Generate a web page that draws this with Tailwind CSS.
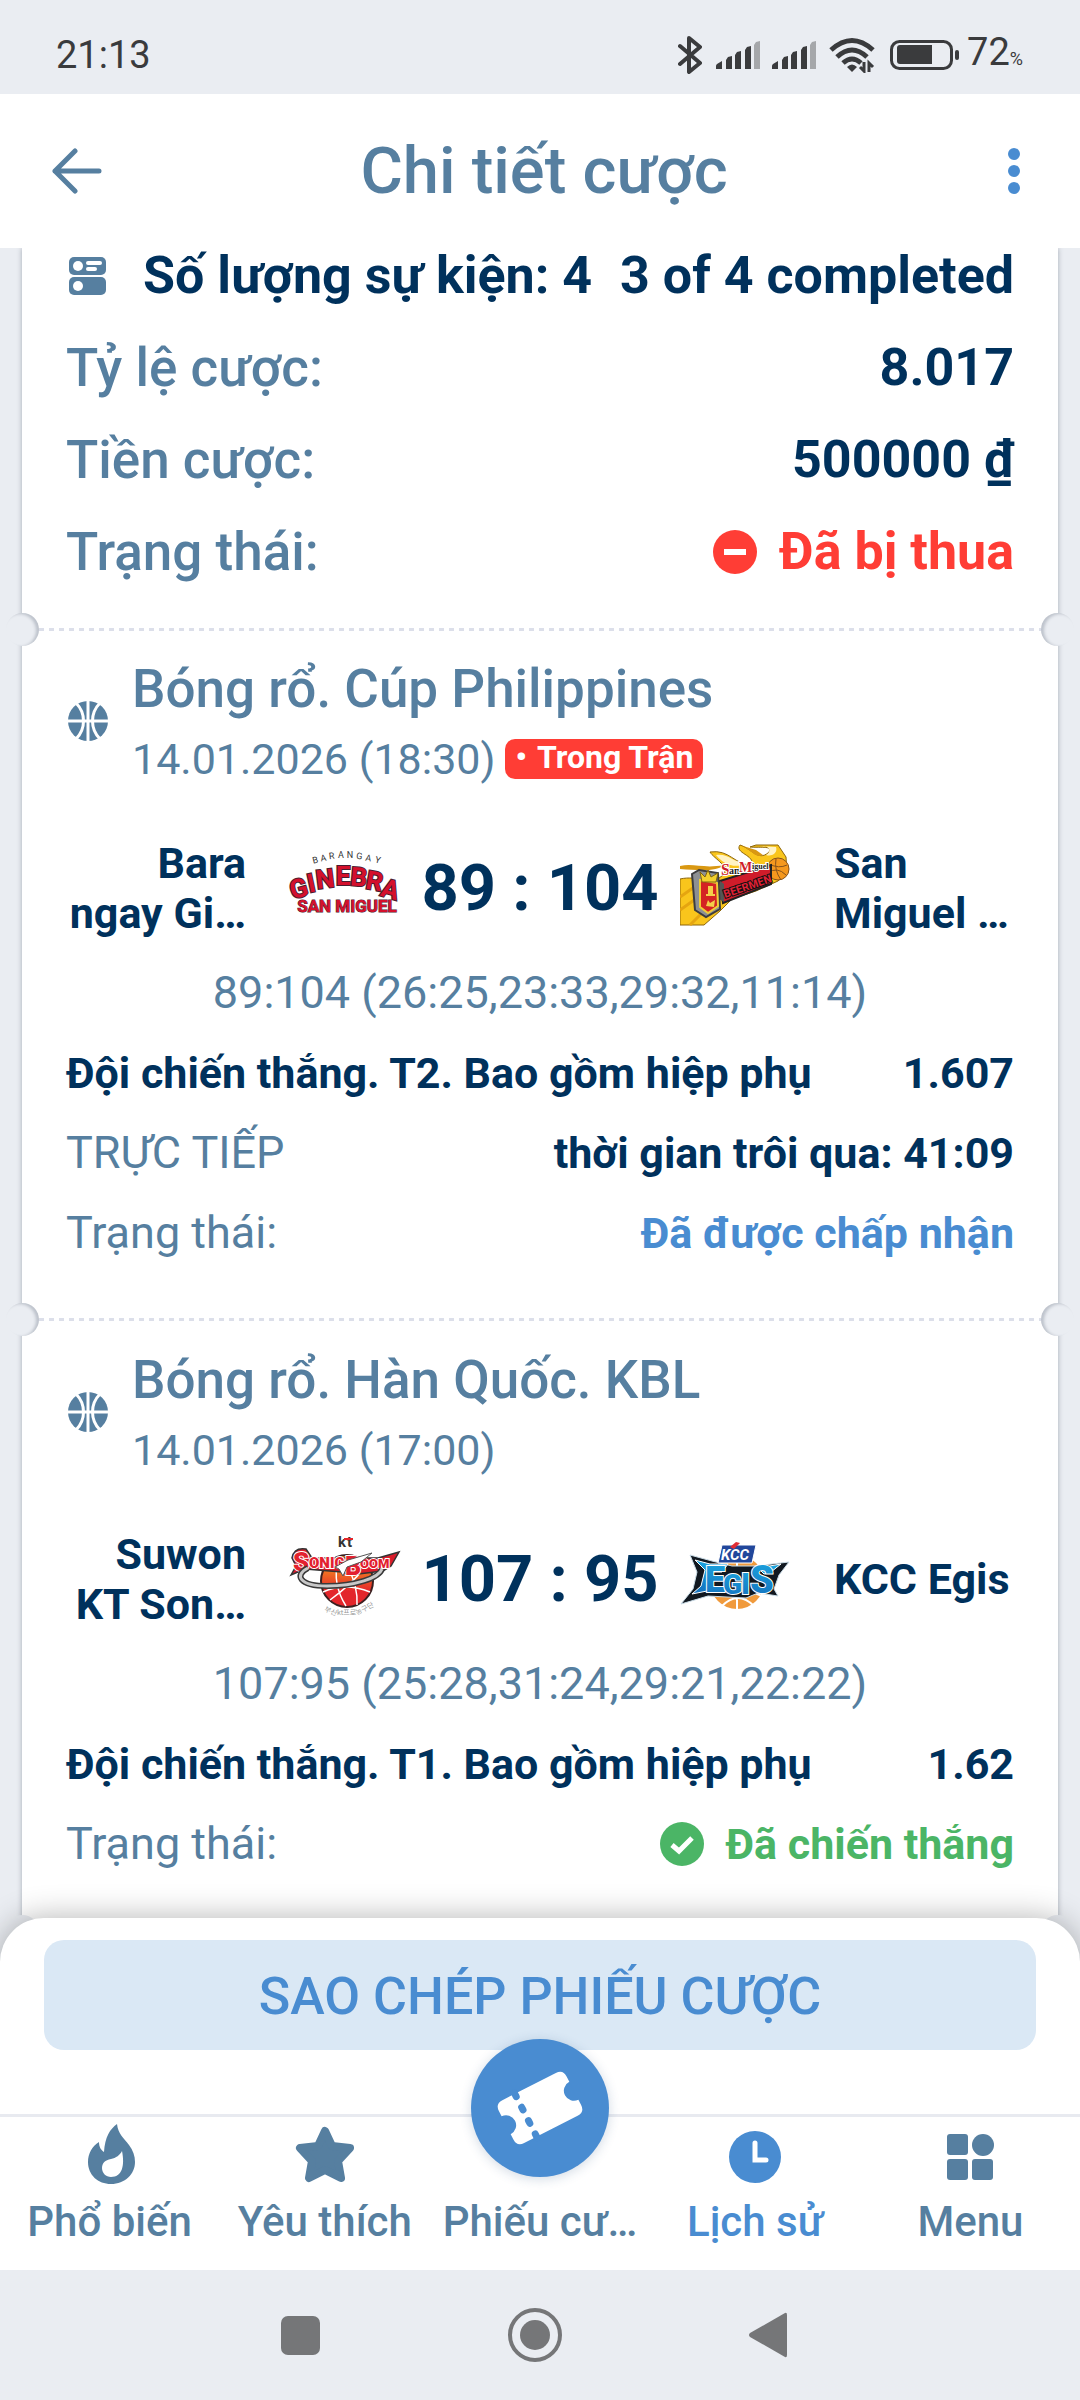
<!DOCTYPE html>
<html lang="vi">
<head>
    <meta charset="UTF-8">
    <meta name="viewport" content="width=device-width, initial-scale=1.0">
    <title>Chi tiết cược</title>
    <script src="https://cdn.jsdelivr.net/npm/@tailwindcss/browser@4"></script>
</head>
<body class="min-h-screen flex flex-col bg-[#eaedf2] font-[Roboto,'Noto_Sans',sans-serif] text-[#567fa0]">

    <!-- Shared icons -->
    <svg class="hidden">
        <symbol id="basketball" viewBox="0 0 40 40">
            <circle cx="20" cy="20" r="20" fill="currentColor"/>
            <path d="M20 0V40M0 20H40M8 2C18 12 18 28 8 38M32 2C22 12 22 28 32 38" fill="none" stroke="#fff" stroke-width="3"/>
        </symbol>
        <symbol id="signal" viewBox="0 0 44 28">
            <path d="M0 28V25Q0 24 1 23L6 20V28ZM10 28V19L12 16L16 15V28ZM19 28V14L21 11L25 10V28ZM29 28V9L31 6L35 5V28Z" fill="#3a3b3d"/>
            <path d="M38 28V4L40 1L44 0V28Z" fill="#a5a7aa"/>
        </symbol>
    </svg>

    <!-- Status bar -->
    <div class="h-[94px] pt-4 pl-14 pr-[57px] flex items-center justify-between text-[#3a3b3d]">
        <span class="text-[38px] leading-[50px]">21:13</span>
        <div class="flex items-center">
            <svg class="w-6 h-[38px] mr-[14px]" viewBox="0 0 24 38" fill="none" stroke="#3a3b3d" stroke-width="4" stroke-linecap="round" stroke-linejoin="round">
                <path d="M2 10L22 27L11 36V2L22 11L2 28"/>
            </svg>
            <svg class="w-11 h-7 mr-3"><use href="#signal"/></svg>
            <svg class="w-11 h-7 mr-[13px]"><use href="#signal"/></svg>
            <svg class="w-[46px] h-9 mr-[15px]" viewBox="0 0 46 36" fill="none" stroke="#3a3b3d" stroke-width="5">
                <path d="M2 13Q23 -6 44 13M8 20Q23 6 38 20M14 26Q23 18 32 26"/>
                <path d="M18 30Q23 25 28 30L23 35Z" fill="#3a3b3d" stroke="none"/>
                <path d="M35 25V34L31 30M40 35V26L44 30" stroke-width="3"/>
            </svg>
            <svg class="w-[69px] h-[30px] mr-2" viewBox="0 0 69 30">
                <rect x="1.5" y="1.5" width="60" height="27" rx="8" fill="none" stroke="#3a3b3d" stroke-width="3"/>
                <path d="M10 5H42V24H10Q7 24 7 21V8Q7 5 10 5Z" fill="#3a3b3d"/>
                <rect x="65" y="10" width="4" height="10" rx="2" fill="#3a3b3d"/>
            </svg>
            <span class="flex items-baseline leading-[50px] text-[38px]">72<span class="text-[18px]">%</span></span>
        </div>
    </div>

    <!-- Header -->
    <header class="relative z-10 h-[154px] px-[52px] flex items-center justify-between bg-white">
        <button aria-label="Back">
            <svg class="w-[50px] h-[46px]" viewBox="0 0 50 46" fill="none" stroke="currentColor" stroke-width="5" stroke-linecap="round" stroke-linejoin="round">
                <path d="M23 3L3 23L23 43M3 23H47"/>
            </svg>
        </button>
        <h1 class="pl-2 text-[65px] leading-[76px] font-medium">Chi tiết cược</h1>
        <button aria-label="More" class="w-[50px] flex justify-end">
            <svg class="w-[26px] h-[46px]" viewBox="0 0 26 46" fill="#498cd1">
                <circle cx="12" cy="6" r="6"/><circle cx="12" cy="23" r="6"/><circle cx="12" cy="40" r="6"/>
            </svg>
        </button>
    </header>

    <main class="mx-[22px] flex flex-col bg-white shadow-[0_0_5px_rgba(60,70,90,0.4)]">

        <!-- Bet summary -->
        <section class="px-11 pt-[2px] pb-[35px] flex flex-col gap-10 text-[53px] leading-[52px] font-medium">
            <div class="flex items-center justify-between font-bold text-[#00315c]">
                <svg class="w-[42px] h-[38px]" viewBox="0 0 42 38">
                    <rect x="3" y="0" width="37" height="18" rx="5" fill="#567fa0"/>
                    <rect x="3" y="20" width="37" height="18" rx="5" fill="#567fa0"/>
                    <g fill="#fff">
                        <circle cx="12" cy="9" r="5"/><circle cx="12" cy="29" r="5"/>
                        <rect x="20" y="4" width="16" height="4" rx="2"/><rect x="20" y="10" width="11" height="4" rx="2"/>
                    </g>
                </svg>
                <div class="flex gap-7 text-[52px]"><span>Số lượng sự kiện: 4</span><span>3 of 4 completed</span></div>
            </div>
            <div class="flex justify-between"><span>Tỷ lệ cược:</span><span class="text-[52px] font-bold text-[#00315c]">8.017</span></div>
            <div class="flex justify-between"><span>Tiền cược:</span><span class="text-[52px] font-bold text-[#00315c]">500000 ₫</span></div>
            <div class="flex justify-between">
                <span>Trạng thái:</span>
                <span class="flex items-center gap-[22px] text-[52px] font-bold text-[#ff3d35]">
                    <svg class="size-11" viewBox="0 0 44 44"><circle cx="22" cy="22" r="22" fill="currentColor"/><rect x="11" y="19" width="22" height="6" fill="#fff"/></svg>
                    Đã bị thua
                </span>
            </div>
        </section>

        <!-- Ticket tear line -->
        <div class="h-[33px] -mx-4 flex items-center justify-between">
            <div class="size-[33px] rounded-full bg-[#eaedf2] shadow-[inset_-3px_1px_3px_rgba(60,70,90,0.25)]"></div>
            <div class="flex-1 h-[3px] bg-[repeating-linear-gradient(90deg,#dcdfea_0_5px,#fff_5px_10px)]"></div>
            <div class="size-[33px] rounded-full bg-[#eaedf2] shadow-[inset_3px_1px_3px_rgba(60,70,90,0.25)]"></div>
        </div>

        <!-- Event 1 -->
        <section class="px-11 pt-[5px] pb-[30px] text-[43px]">
            <div class="flex items-center gap-[22px]">
                <svg class="size-11 p-[2px]"><use href="#basketball"/></svg>
                <div>
                    <h2 class="text-[53px] leading-[76px] font-medium">Bóng rổ. Cúp Philippines</h2>
                    <p class="flex items-center gap-[10px] leading-[64px]">14.01.2026 (18:30)
                        <span class="h-10 px-[10px] flex gap-[10px] rounded-[10px] bg-[#ff3d35] text-white text-[32px] leading-[37px] font-bold"><span>•</span>Trong Trận</span>
                    </p>
                </div>
            </div>
            <div class="mt-[42px] mb-[10px] flex items-center text-[#00315c] font-bold">
                <p class="flex-1 mr-11 text-right leading-[50px]">Bara<br>ngay Gi…</p>
                <svg class="size-[110px] overflow-visible" viewBox="0 0 110 110" font-family="Roboto, sans-serif" text-anchor="middle">
                    <g font-size="9" font-weight="400" fill="#333">
                        <text x="26" y="30" transform="rotate(-14 26 30)">B</text><text x="34" y="28" transform="rotate(-10 34 28)">A</text><text x="42" y="26" transform="rotate(-7 42 26)">R</text><text x="51" y="25">A</text><text x="60" y="25">N</text><text x="69" y="26" transform="rotate(6 69 26)">G</text><text x="78" y="28" transform="rotate(10 78 28)">A</text><text x="87" y="30" transform="rotate(14 87 30)">Y</text>
                    </g>
                    <g font-weight="700" fill="#d4102c" stroke="#4a1c30" stroke-width="2" paint-order="stroke">
                        <g font-size="26">
                            <text x="11" y="64" transform="rotate(-16 11 64)">G</text><text x="23" y="59" transform="rotate(-12 23 59)">I</text><text x="36" y="55" transform="rotate(-7 36 55)">N</text><text x="53" y="52">E</text><text x="68" y="53" transform="rotate(5 68 53)">B</text><text x="83" y="57" transform="rotate(10 83 57)">R</text><text x="98" y="65" transform="rotate(16 98 65)">A</text>
                        </g>
                        <text x="57" y="79" font-size="17" stroke-width="1">SAN MIGUEL</text>
                    </g>
                </svg>
                <p class="w-[280px] text-center text-[65px] leading-[64px]">89 : 104</p>
                <svg class="size-[110px]" viewBox="0 0 110 110" font-family="Roboto, sans-serif">
                    <path d="M0 46C18 42 30 52 42 43C52 34 34 26 30 19C50 16 54 32 72 32C75 22 54 20 60 12C72 16 78 28 88 20C96 12 78 15 70 14L76 12H98L106 24L107 40L98 48L76 58L52 66L40 78L24 92H0Z" fill="#f9c51c" stroke="#8c650b" stroke-width="1"/>
                    <path d="M0 33C14 30 24 36 44 32C38 38 22 38 0 36ZM60 12C72 16 74 26 83 22L76 17Z" fill="#d99812"/>
                    <path d="M36 22C48 20 54 30 66 30C56 36 44 32 36 22ZM80 13C90 12 92 18 86 22C92 24 98 20 96 14Z" fill="#fff3c4"/>
                    <path d="M0 64L20 50M0 77L24 60M10 92L32 70" stroke="#e5a510" stroke-width="3"/>
                    <circle cx="98" cy="36" r="11" fill="#f5981e" stroke="#86521c"/>
                    <path d="M89 31Q99 36 107 32M96 26Q94 37 101 47M88 40Q97 33 106 42" fill="none" stroke="#86521c"/>
                    <path d="M40 48L91 32V51L43 70Z" fill="#cf1c2a" stroke="#222" stroke-width="2"/>
                    <path d="M40 48L44 51V69L39 66Z" fill="#555"/>
                    <text x="45" y="65" font-size="11" font-weight="700" fill="#e02035" stroke="#111" stroke-width="2" paint-order="stroke" transform="rotate(-19 45 65)">BEERMEN</text>
                    <path d="M12 41L19 37L38 40L40 76L26 84L15 77Z" fill="#8d9093" stroke="#3d3d3f" stroke-width="2"/>
                    <path d="M20 47L37 50L38 73L28 80L20 74Z" fill="#d42223" stroke="#efcc37" stroke-width="2"/>
                    <path d="M20 39L25 44L28 37L31 44L38 40L36 49H22Z" fill="#f2d02e" stroke="#80650e"/>
                    <path d="M28 53H33V61H35V63H26V61H28ZM26 73L28 67L30 70L35 67L34 74Z" fill="#f4cf4a"/>
                    <g font-family="Liberation Serif, serif" font-size="16" font-weight="700" stroke="#fff" stroke-width="2" paint-order="stroke">
                        <text x="41" y="42" fill="#cf1c2a">S</text><text x="49" y="41" font-size="10" fill="#222">an</text>
                        <text x="59" y="39" font-size="14" fill="#cf1c2a">M</text><text x="72" y="36" font-size="8" fill="#222">iguel</text>
                    </g>
                </svg>
                <p class="flex-1 ml-11 leading-[50px] whitespace-nowrap">San<br>Miguel …</p>
            </div>
            <p class="text-center text-[45px] leading-[80px]">89:104 (26:25,23:33,29:32,11:14)</p>
            <div class="flex justify-between leading-[80px] font-bold text-[#00315c]"><span>Đội chiến thắng. T2. Bao gồm hiệp phụ</span><span>1.607</span></div>
            <div class="flex justify-between leading-[80px]"><span class="text-[45px]">TRỰC TIẾP</span><span class="font-bold text-[#00315c]">thời gian trôi qua: 41:09</span></div>
            <div class="flex justify-between leading-[80px]"><span class="text-[45px]">Trạng thái:</span><span class="font-bold text-[#498cd1]">Đã được chấp nhận</span></div>
        </section>

        <div class="h-[33px] -mx-4 flex items-center justify-between">
            <div class="size-[33px] rounded-full bg-[#eaedf2] shadow-[inset_-3px_1px_3px_rgba(60,70,90,0.25)]"></div>
            <div class="flex-1 h-[3px] bg-[repeating-linear-gradient(90deg,#dcdfea_0_5px,#fff_5px_10px)]"></div>
            <div class="size-[33px] rounded-full bg-[#eaedf2] shadow-[inset_3px_1px_3px_rgba(60,70,90,0.25)]"></div>
        </div>

        <!-- Event 2 -->
        <section class="px-11 pt-[6px] pb-[31px] text-[43px]">
            <div class="flex items-center gap-[22px]">
                <svg class="size-11 p-[2px]"><use href="#basketball"/></svg>
                <div>
                    <h2 class="text-[53px] leading-[76px] font-medium">Bóng rổ. Hàn Quốc. KBL</h2>
                    <p class="leading-[64px]">14.01.2026 (17:00)</p>
                </div>
            </div>
            <div class="mt-[42px] mb-[10px] flex items-center text-[#00315c] font-bold">
                <p class="flex-1 mr-11 text-right leading-[50px]">Suwon<br>KT Son…</p>
                <svg class="size-[110px] overflow-visible" viewBox="0 0 110 110" font-family="Roboto, sans-serif">
                    <defs>
                        <linearGradient id="ball" x1="0" y1="0" x2="0" y2="1">
                            <stop offset="0.2" stop-color="#f58a1f"/><stop offset="0.7" stop-color="#e3262b"/>
                        </linearGradient>
                    </defs>
                    <circle cx="57" cy="57" r="26" fill="url(#ball)" stroke="#3b2020" stroke-width="2"/>
                    <path d="M33 68Q55 58 80 68M40 76Q62 60 74 44M56 82Q42 60 48 36M67 81Q68 62 58 44" fill="none" stroke="#fff" stroke-width="1.5"/>
                    <text x="48" y="23" font-size="15" font-weight="700" fill="#333">k</text>
                    <text x="57" y="23" font-size="15" font-weight="700" fill="#333">t</text>
                    <path d="M54 15H63" stroke="#e3262b" stroke-width="2"/>
                    <path d="M1 51L6 42L2 34Q4 23 16 25L22 34H88L109 28L101 42L93 47L60 51L52 48L15 45Z" fill="#d91c2b" stroke="#333" stroke-width="1.5"/>
                    <g font-weight="900" fill="#e3202e" stroke="#fff" stroke-width="2" paint-order="stroke">
                        <text x="3" y="47" font-size="26">S</text><text x="19" y="44" font-size="15">ONIC</text>
                        <text x="55" y="51" font-size="25">B</text><text x="70" y="44" font-size="13">OOM</text>
                    </g>
                    <path d="M45 43L58 36L82 29L71 38L57 43L53 52L49 45Z" fill="#fff" stroke="#555" stroke-width="1"/>
                    <path d="M18 44C4 51 9 62 37 62C65 62 89 54 92 45" fill="none" stroke="#3a3a3a" stroke-width="6"/>
                    <path d="M18 44C4 51 9 62 37 62C65 62 89 54 92 45" fill="none" stroke="#c8c8c8" stroke-width="3"/>
                    <g font-family="Noto Sans CJK KR, sans-serif" font-size="7" font-weight="400" fill="#999">
                        <text x="34" y="87" transform="rotate(22 34 87)">부산</text><text x="47" y="91">kt프로</text><text x="67" y="91" transform="rotate(-26 67 91)">농구단</text>
                    </g>
                </svg>
                <p class="w-[280px] text-center text-[65px] leading-[64px]">107 : 95</p>
                <svg class="size-[110px]" viewBox="0 0 110 110" font-family="Roboto, sans-serif">
                    <defs>
                        <linearGradient id="egis" x1="0" y1="0" x2="0" y2="1">
                            <stop offset="0" stop-color="#1ba5df"/><stop offset="1" stop-color="#1570bd"/>
                        </linearGradient>
                    </defs>
                    <circle cx="57" cy="58" r="27" fill="#f09a3c"/>
                    <path d="M32 70Q57 60 82 72M57 31V85M42 82Q58 66 74 82M35 42Q57 55 80 42" fill="none" stroke="#fff" stroke-width="2"/>
                    <path d="M10 31L32 37L52 42H75L109 38L99 51L94 65L98 72L78 69L66 74L28 72L1 80L13 65L17 48Z" fill="#111820" stroke="#c9dbe6" stroke-width="1"/>
                    <path d="M15 36L30 40H48L42 48H32V66L12 70L21 62L25 46Z" fill="url(#egis)" stroke="#fff" stroke-width="1"/>
                    <path d="M78 44L101 40L91 48L84 50Z" fill="#1ba5df" stroke="#fff" stroke-width="1"/>
                    <g font-weight="900" fill="url(#egis)" stroke="#fff" stroke-width="2" paint-order="stroke">
                        <text x="25" y="68" font-size="36">E</text><text x="43" y="70" font-size="28">G</text><text x="61" y="70" font-size="30">I</text><text x="70" y="69" font-size="38">S</text>
                    </g>
                    <path d="M42 21H76L72 39H38Z" fill="#21479b" stroke="#fff" stroke-width="1"/>
                    <text x="41" y="36" font-size="15" font-weight="700" font-style="italic" fill="#fff">KCC</text>
                    <path d="M50 23L56 18L60 19L54 25Z" fill="#e12d35"/>
                </svg>
                <p class="flex-1 ml-11 leading-[50px] whitespace-nowrap">KCC Egis</p>
            </div>
            <p class="text-center text-[45px] leading-[80px]">107:95 (25:28,31:24,29:21,22:22)</p>
            <div class="flex justify-between leading-[80px] font-bold text-[#00315c]"><span>Đội chiến thắng. T1. Bao gồm hiệp phụ</span><span>1.62</span></div>
            <div class="flex justify-between leading-[80px]">
                <span class="text-[45px]">Trạng thái:</span>
                <span class="flex items-center gap-[22px] font-bold text-[#4bb566]">
                    <svg class="size-11" viewBox="0 0 44 44"><circle cx="22" cy="22" r="22" fill="currentColor"/><path d="M12 23L19 29L32 16" fill="none" stroke="#fff" stroke-width="5"/></svg>
                    Đã chiến thắng
                </span>
            </div>
        </section>

        <div class="h-[33px] -mx-4 flex items-center justify-between">
            <div class="size-[33px] rounded-full bg-[#eaedf2]"></div>
            <div class="size-[33px] rounded-full bg-[#eaedf2]"></div>
        </div>
    </main>

    <!-- Bottom sheet -->
    <div class="relative z-10 -mt-[30px] pt-[22px] rounded-t-[44px] bg-white shadow-[0_0_32px_rgba(0,0,0,0.3)]">
        <div class="px-11">
            <button class="w-full h-[110px] pt-1 rounded-[20px] bg-[#dae8f5] text-[#498cd1] text-[52px] font-medium">SAO CHÉP PHIẾU CƯỢC</button>
        </div>
        <nav class="mt-16 px-[2px] pt-[9px] pb-[23px] border-t-3 border-[#e8eaf0] grid grid-cols-5 text-[42px] leading-[50px] font-medium text-center">
            <a href="#" class="flex flex-col items-center gap-[11px]">
                <svg class="size-[60px] overflow-visible" viewBox="0 0 60 60">
                    <path d="M37 -2C30 3 25 11 24 26C21 24 19 21 19 16C12 20 8 28 8 36C8 49 18 58 31 58C45 58 55 48 55 36C55 30 53 24 49 19C44 12 38 8 37 -2ZM42 25C45 40 42 51 31 51C26 51 22 47 22 42C22 37 25 34 31 33C36 32 40 29 42 25Z" fill="currentColor" fill-rule="evenodd"/>
                </svg>
                Phổ biến
            </a>
            <a href="#" class="flex flex-col items-center gap-[11px]">
                <svg class="size-[60px]" viewBox="0 0 60 60">
                    <path d="M30 5L37 20L55 22L43 35L46 52L30 44L14 52L17 35L5 22L23 20Z" fill="currentColor" stroke="currentColor" stroke-width="8" stroke-linejoin="round"/>
                </svg>
                Yêu thích
            </a>
            <a href="#" class="relative flex flex-col items-center pt-[71px] whitespace-nowrap">
                <span class="absolute -top-[87px] size-[138px] rounded-full bg-[#498cd1] shadow-[0_2px_12px_rgba(30,70,120,0.2)]">
                    <svg viewBox="0 0 138 138">
                        <g transform="rotate(-27 69 69)">
                            <path d="M39 45H99Q107 45 107 53V59A10 10 0 0 0 107 79V85Q107 93 99 93H39Q31 93 31 85V79A10 10 0 0 0 31 59V53Q31 45 39 45Z" fill="#fff"/>
                            <path d="M53 44V48M53 60V63M53 75V78M53 90V94" stroke="#498cd1" stroke-width="7" stroke-linecap="round"/>
                        </g>
                    </svg>
                </span>
                Phiếu cư…
            </a>
            <a href="#" class="flex flex-col items-center gap-[11px] text-[#498cd1]">
                <svg class="size-[60px]" viewBox="0 0 60 60">
                    <circle cx="30" cy="31" r="26" fill="currentColor"/><path d="M30 17V34H41" fill="none" stroke="#fff" stroke-width="5" stroke-linecap="round"/>
                </svg>
                Lịch sử
            </a>
            <a href="#" class="flex flex-col items-center gap-[11px]">
                <svg class="size-[60px]" viewBox="0 0 60 60" fill="currentColor">
                    <rect x="7" y="8" width="21" height="21" rx="3"/><circle cx="43" cy="19" r="11"/>
                    <rect x="7" y="33" width="21" height="21" rx="3"/><rect x="32" y="33" width="21" height="21" rx="3"/>
                </svg>
                Menu
            </a>
        </nav>
    </div>

    <!-- System navigation -->
    <div class="relative z-10 h-[130px] pl-[281px] pr-[293px] flex items-center justify-between bg-[#eaedf2]">
        <button aria-label="Recent" class="size-[39px] rounded-[7px] bg-[#757678]"></button>
        <button aria-label="Home" class="size-[54px] rounded-full border-4 border-[#757678] flex items-center justify-center"><span class="size-[30px] rounded-full bg-[#757678]"></span></button>
        <button aria-label="Back">
            <svg class="w-[38px] h-[46px]" viewBox="0 0 38 46"><path d="M1 21L36 1Q38 0 38 3V43Q38 46 36 45L1 25Q-1 23 1 21Z" fill="#757678"/></svg>
        </button>
    </div>
</body>
</html>
